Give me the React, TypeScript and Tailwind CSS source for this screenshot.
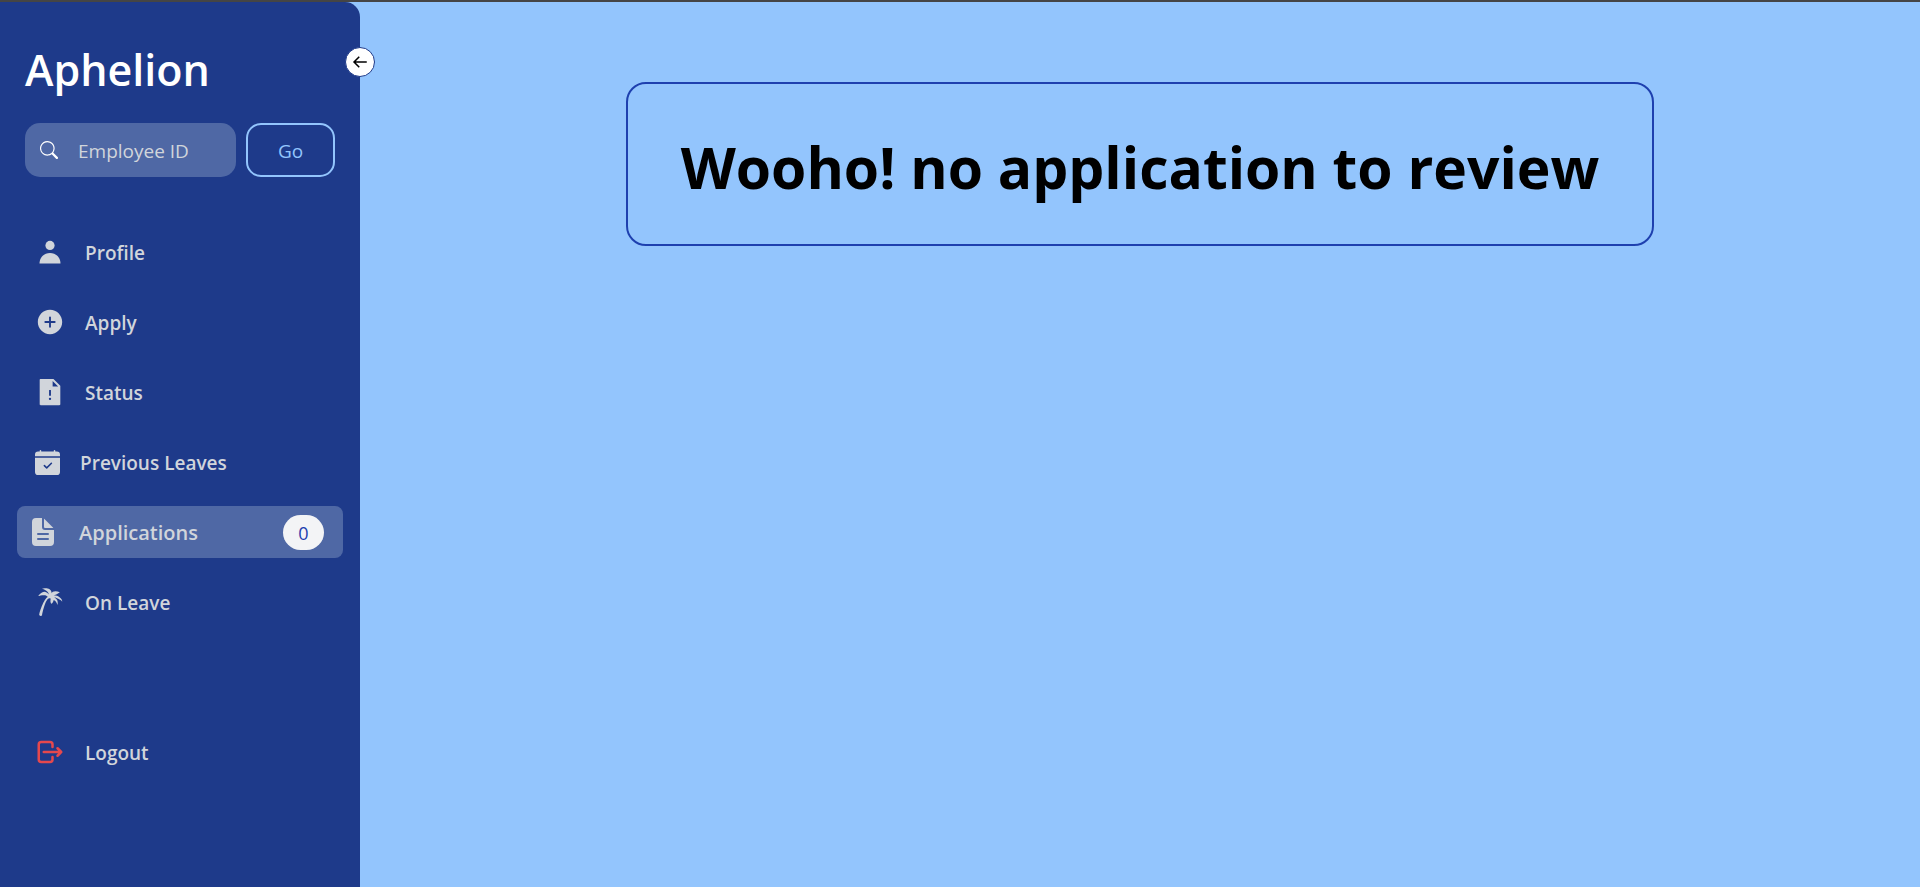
import type { ReactNode } from "react";
import { AiFillFileExclamation } from "react-icons/ai";
import { BiArrowBack } from "react-icons/bi";
import { BsCalendarCheckFill, BsSearch } from "react-icons/bs";
import { GiPalmTree } from "react-icons/gi";
import { IoAddCircle, IoDocumentText } from "react-icons/io5";

function PersonIcon() {
  return (
    <svg viewBox="0 0 30 30" fill="currentColor" className="size-[30px]" aria-hidden="true">
      <circle cx="15" cy="8.4" r="4.6" />
      <path d="M4.5 26.5C4.5 20.4 9.2 16 15 16s10.5 4.4 10.5 10.5z" />
    </svg>
  );
}

function LogoutIcon() {
  return (
    <svg
      viewBox="0 0 24 24"
      fill="none"
      stroke="currentColor"
      strokeWidth="2"
      strokeLinecap="round"
      strokeLinejoin="round"
      className="size-[30px] text-[#e5484d]"
      aria-hidden="true"
    >
      <path d="M14 8V6a2 2 0 0 0-2-2H5a2 2 0 0 0-2 2v12a2 2 0 0 0 2 2h7a2 2 0 0 0 2-2v-2" />
      <path d="M7 12h14l-3-3m0 6 3-3" />
    </svg>
  );
}

type NavItemProps = { icon: ReactNode; label: string; count?: number };

function NavItem({ icon, label, count }: NavItemProps) {
  const active = count !== undefined;
  return (
    <a
      href="#"
      aria-current={active ? "page" : undefined}
      className={
        active
          ? "flex h-[52px] items-center gap-5 rounded-lg bg-[#4f68a5] pl-[10px] pr-[19px] text-xl"
          : "flex h-[52px] items-center gap-5 rounded-lg px-[18px] text-[19px]"
      }
    >
      {icon}
      <span className="flex-1 pt-0.5">{label}</span>
      {active && (
        <span className="flex h-[35px] w-[41px] items-center justify-center rounded-full bg-[#f3f4f6] pt-0.5 text-lg font-medium text-[#1e40af]">
          {count}
        </span>
      )}
    </a>
  );
}

export default function App() {
  return (
    <div className="flex min-h-screen border-t-2 border-[#454545] bg-[#93c5fd] font-['Open_Sans','Noto_Sans',sans-serif]">
      <aside className="relative w-[360px] shrink-0 rounded-tr-[15px] bg-[#1e3a8a]">
        <button
          type="button"
          aria-label="Collapse sidebar"
          className="absolute -right-[15px] top-[45px] flex size-[30px] items-center justify-center rounded-full border border-[#1e3a8a] bg-white text-black"
        >
          <BiArrowBack className="size-[18px]" />
        </button>

        <h1 className="px-[25px] pt-[38px] text-[43px] font-semibold leading-[60px] text-white">Aphelion</h1>

        <form className="mt-[23px] flex gap-[10px] px-[25px]">
          <label className="flex h-[54px] min-w-0 flex-1 items-center gap-5 rounded-[15px] bg-[#4f68a5] pl-[15px] pr-3">
            <BsSearch className="size-[18px] shrink-0 text-white" />
            <input
              type="text"
              aria-label="Employee ID"
              placeholder="Employee ID"
              className="w-full min-w-0 bg-transparent pt-0.5 text-[19px] text-white outline-none placeholder:text-[#d1d5db]"
            />
          </label>
          <button
            type="button"
            className="h-[54px] w-[89px] rounded-[15px] border-2 border-[#93c5fd] pt-0.5 text-[19px] text-[#93c5fd]"
          >
            Go
          </button>
        </form>

        <nav className="mt-[49px] flex flex-col gap-[18px] px-[17px] font-semibold text-[#d1d5db]">
          <NavItem icon={<PersonIcon />} label="Profile" />
          <NavItem icon={<IoAddCircle className="size-[30px]" />} label="Apply" />
          <NavItem icon={<AiFillFileExclamation className="size-[30px]" />} label="Status" />
          <NavItem icon={<BsCalendarCheckFill className="size-[25px]" />} label="Previous Leaves" />
          <NavItem icon={<IoDocumentText className="size-8" />} label="Applications" count={0} />
          <NavItem icon={<GiPalmTree className="size-[30px]" />} label="On Leave" />
          <div className="mt-20">
            <NavItem icon={<LogoutIcon />} label="Logout" />
          </div>
        </nav>
      </aside>

      <main className="flex flex-1 items-start justify-center pt-20">
        <section className="rounded-[20px] border-2 border-[#1e40af] px-[53px] pb-[37px] pt-[43px]">
          <h2 className="text-[57px] font-bold leading-[80px] text-black">Wooho! no application to review</h2>
        </section>
      </main>
    </div>
  );
}
